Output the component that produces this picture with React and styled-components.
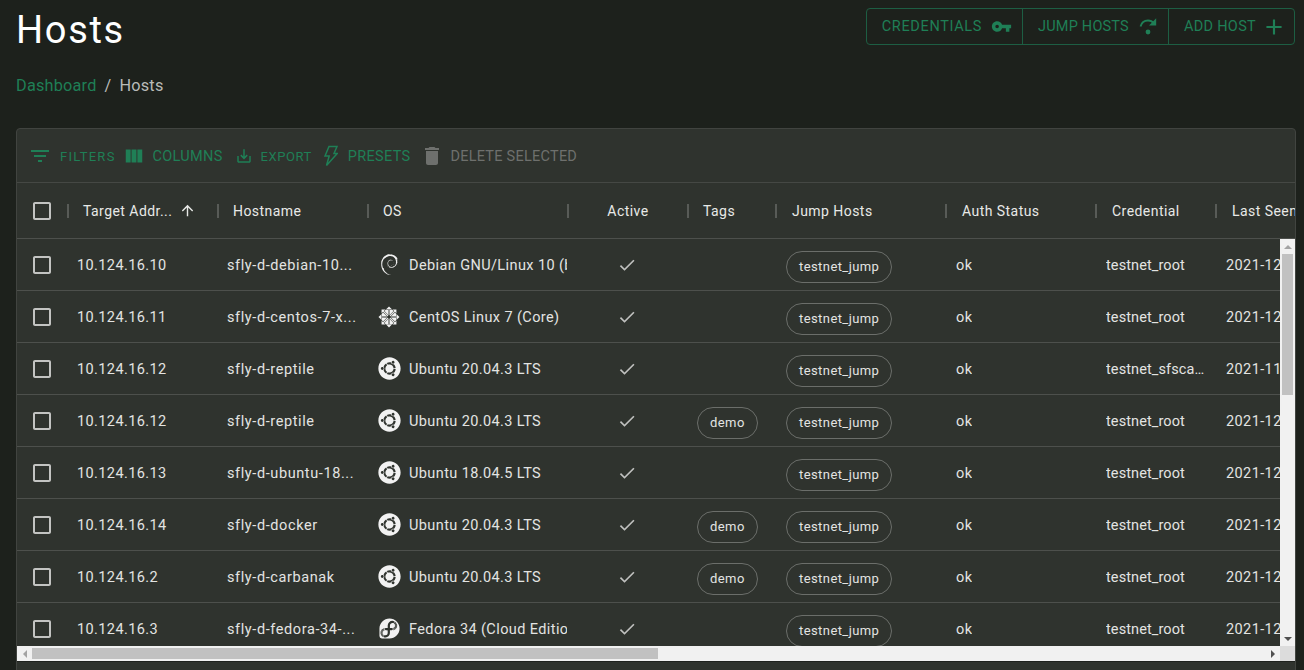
import React from 'react';
import styled, { css, createGlobalStyle } from 'styled-components';
import {
  MdFilterList, MdViewColumn, MdSaveAlt, MdDelete, MdAdd, MdCheck,
  MdArrowUpward, MdVpnKey, MdCheckBoxOutlineBlank,
} from 'react-icons/md';
import { FaUbuntu, FaCentos, FaFedora } from 'react-icons/fa';
import { SiDebian } from 'react-icons/si';

const GREEN = '#1f7f56';

const GlobalStyle = createGlobalStyle`
  html, body {
    margin: 0;
    height: 100%;
    overflow: hidden;
    background: #1d211c;
    font-family: "Roboto", "Liberation Sans", sans-serif;
  }
`;

const Page = styled.div`
  height: 670px;
  overflow: hidden;
  padding: 0 9px 0 16px;
  box-sizing: border-box;
`;

const TopBar = styled.div`
  display: flex;
  justify-content: space-between;
  align-items: flex-start;
  height: 128px;
`;

const Title = styled.h1`
  margin: 7px 0 0;
  font-size: 38px;
  line-height: 46px;
  font-weight: 400;
  letter-spacing: 1.7px;
  color: #fff;
`;

const Crumbs = styled.div`
  margin-top: 21px;
  font-size: 16.3px;
  line-height: 24px;
  letter-spacing: 0.2px;
  color: #b9bbb8;
  display: flex;
  gap: 8px;
`;

const CrumbLink = styled.span`
  color: ${GREEN};
`;

const ButtonGroup = styled.div`
  display: flex;
  margin-top: 8px;
  height: 37px;
  border: 1px solid #1d5e43;
  border-radius: 4px;
  box-sizing: border-box;
`;

const GroupButton = styled.div`
  display: flex;
  align-items: center;
  gap: ${(p) => p.$gap}px;
  padding: 0 ${(p) => p.$right}px 0 15px;
  color: ${GREEN};
  font-size: 14.5px;
  letter-spacing: ${(p) => p.$spacing}px;
  & + & {
    border-left: 1px solid #1d5e43;
  }
`;

const Card = styled.div`
  width: 1280px;
  height: 560px;
  background: #2f332e;
  border: 1px solid #414440;
  border-radius: 4px;
  box-sizing: border-box;
  overflow: hidden;
`;

const Toolbar = styled.div`
  display: flex;
  align-items: center;
  height: 54px;
  padding-left: 11px;
  border-bottom: 1px solid #454844;
  box-sizing: border-box;
`;

const ToolButton = styled.div`
  display: flex;
  align-items: center;
  gap: ${(p) => p.$gap}px;
  margin-left: ${(p) => p.$left}px;
  padding-top: 1px;
  color: ${(p) => (p.$off ? '#6e706d' : GREEN)};
  font-size: ${(p) => p.$size}px;
  letter-spacing: ${(p) => p.$spacing}px;
`;

const HeaderRow = styled.div`
  display: flex;
  align-items: center;
  height: 56px;
  width: 1278px;
  overflow: hidden;
  border-bottom: 1px solid #4d504c;
  box-sizing: border-box;
`;

const HeadCell = styled.div`
  flex: 0 0 ${(p) => p.$w}px;
  box-sizing: border-box;
  display: flex;
  align-items: center;
  justify-content: ${(p) => (p.$center ? 'center' : 'flex-start')};
  height: 14px;
  padding-left: ${(p) => (p.$center ? 0 : p.$pad || 14)}px;
  border-left: 2px solid #585b57;
  font-size: 14px;
  letter-spacing: 0.45px;
  color: #e8e9e7;
  white-space: nowrap;
`;

const SortArrow = styled(MdArrowUpward)`
  margin-left: 7px;
`;

const CheckCell = styled.div`
  flex: 0 0 ${(p) => p.$w}px;
  display: flex;
  align-items: center;
  justify-content: center;
  color: #c3c4c2;
  font-size: 24px;
  padding-right: ${(p) => p.$pad || 0}px;
`;

const Viewport = styled.div`
  position: relative;
  width: 1278px;
  height: 422px;
  overflow: hidden;
  border-bottom: 1px solid #1f221e;
`;

const Row = styled.div`
  display: flex;
  height: 52px;
  border-bottom: 1px solid #4d504c;
  box-sizing: border-box;
`;

const Cell = styled.div`
  flex: 0 0 ${(p) => p.$w}px;
  box-sizing: border-box;
  display: flex;
  align-items: center;
  justify-content: ${(p) => (p.$center ? 'center' : 'flex-start')};
  padding: 0 10px;
  overflow: hidden;
  font-size: 14.5px;
  letter-spacing: 0.4px;
  color: #e3e4e2;
  white-space: nowrap;
`;

const CellText = styled.span`
  overflow: hidden;
  padding-top: 2px;
  letter-spacing: ${(p) => (p.$spacing !== undefined ? `${p.$spacing}px` : 'inherit')};
  text-overflow: ${(p) => (p.$clip ? 'clip' : 'ellipsis')};
`;

const OsCell = styled(Cell)`
  gap: 8px;
  padding-right: 0;
`;

const OsIcon = styled.span`
  flex: 0 0 24px;
  height: 24px;
  display: flex;
  align-items: center;
  justify-content: center;
  color: #f2f2f2;
`;

const Chip = styled.span`
  display: inline-flex;
  align-items: center;
  height: 32px;
  margin-top: 4px;
  padding: 0 12px;
  border: 1px solid #6b6e6a;
  border-radius: 16px;
  box-sizing: border-box;
  font-size: 13px;
  letter-spacing: 0.42px;
  color: #e3e4e2;
`;

const VBar = styled.div`
  position: absolute;
  top: 0;
  right: 0;
  width: 15px;
  height: 407px;
  background: #f1f1f1;
  display: flex;
  flex-direction: column;
`;

const HBar = styled.div`
  position: absolute;
  left: 0;
  bottom: 0;
  width: 1263px;
  height: 15px;
  background: #f1f1f1;
  display: flex;
`;

const Corner = styled.div`
  position: absolute;
  right: 0;
  bottom: 0;
  width: 15px;
  height: 15px;
  background: #dcdcdc;
`;

const BarButton = styled.div`
  flex: 0 0 15px;
  display: flex;
  align-items: center;
  justify-content: center;
  ${(p) => p.$last && css`margin-${p.$horizontal ? 'left' : 'top'}: auto;`}
`;

const Thumb = styled.div`
  background: #c1c1c1;
  ${(p) => (p.$horizontal
    ? css`margin: 2px 0; flex: 0 0 626px;`
    : css`margin: 0 2px; flex: 0 0 141px;`)}
`;

const Triangle = styled.span`
  width: 0;
  height: 0;
  border-style: solid;
  border-color: transparent;
  ${(p) => {
    const color = p.$off ? '#a3a3a3' : '#505050';
    if (p.$dir === 'up') return css`border-width: 0 4px 4.5px; border-bottom-color: ${color};`;
    if (p.$dir === 'down') return css`border-width: 4.5px 4px 0; border-top-color: ${color};`;
    if (p.$dir === 'left') return css`border-width: 4px 4.5px 4px 0; border-right-color: ${color};`;
    return css`border-width: 4px 0 4px 4.5px; border-left-color: ${color};`;
  }}
`;

const BoltIcon = () => (
  <svg width="14" height="22" viewBox="0 0 14 22" fill="none" stroke="currentColor" strokeWidth="1.5">
    <path d="M5 1.5h8l-3 7h3.2L2.5 20.5l2.7-9.5H1z" />
  </svg>
);

// arc with an arrow over a dot
const StepOverIcon = () => (
  <svg width="24" height="24" viewBox="0 0 24 24" fill="currentColor">
    <circle cx="12" cy="17" r="2.4" />
    <path d="M4.5 11.5C5.5 7.8 8.5 5.5 12 5.5c2.4 0 4.4 1 5.8 2.8" fill="none" stroke="currentColor" strokeWidth="1.9" />
    <path d="M20.2 3.2v7.3h-7.2z" />
  </svg>
);

const UBUNTU = <FaUbuntu size={23} />;
const hosts = [
  ['10.124.16.10', 'sfly-d-debian-10...', <SiDebian size={21} />, 'Debian GNU/Linux 10 (buster)', '', 'testnet_root', '2021-12'],
  ['10.124.16.11', 'sfly-d-centos-7-x...', <FaCentos size={24} />, 'CentOS Linux 7 (Core)', '', 'testnet_root', '2021-12'],
  ['10.124.16.12', 'sfly-d-reptile', UBUNTU, 'Ubuntu 20.04.3 LTS', '', 'testnet_sfsca...', '2021-11'],
  ['10.124.16.12', 'sfly-d-reptile', UBUNTU, 'Ubuntu 20.04.3 LTS', 'demo', 'testnet_root', '2021-12'],
  ['10.124.16.13', 'sfly-d-ubuntu-18...', UBUNTU, 'Ubuntu 18.04.5 LTS', '', 'testnet_root', '2021-12'],
  ['10.124.16.14', 'sfly-d-docker', UBUNTU, 'Ubuntu 20.04.3 LTS', 'demo', 'testnet_root', '2021-12'],
  ['10.124.16.2', 'sfly-d-carbanak', UBUNTU, 'Ubuntu 20.04.3 LTS', 'demo', 'testnet_root', '2021-12'],
  ['10.124.16.3', 'sfly-d-fedora-34-...', <FaFedora size={23} />, 'Fedora 34 (Cloud Edition)', '', 'testnet_root', '2021-12'],
  ['10.124.16.4', 'sfly-d-ubuntu-20...', UBUNTU, 'Ubuntu 20.04.3 LTS', '', 'testnet_root', '2021-12'],
];

export default function App() {
  return (
    <Page>
      <GlobalStyle />
      <TopBar>
        <div>
          <Title>Hosts</Title>
          <Crumbs>
            <CrumbLink>Dashboard</CrumbLink>
            <span>/</span>
            <span>Hosts</span>
          </Crumbs>
        </div>
        <ButtonGroup>
          <GroupButton $gap={9} $right={10} $spacing={0.65}>CREDENTIALS <MdVpnKey size={21} /></GroupButton>
          <GroupButton $gap={7} $right={8} $spacing={0.2}>JUMP HOSTS <StepOverIcon /></GroupButton>
          <GroupButton $gap={5} $right={7} $spacing={0.3}>ADD HOST <MdAdd size={26} /></GroupButton>
        </ButtonGroup>
      </TopBar>
      <Card>
        <Toolbar>
          <ToolButton $gap={8} $left={0} $size={13} $spacing={1.25}><MdFilterList size={24} />FILTERS</ToolButton>
          <ToolButton $gap={8} $left={7} $size={14.5} $spacing={0.3}><MdViewColumn size={22} />COLUMNS</ToolButton>
          <ToolButton $gap={8} $left={12} $size={13} $spacing={0.55}><MdSaveAlt size={18} />EXPORT</ToolButton>
          <ToolButton $gap={10} $left={12} $size={14.5} $spacing={0.3}><BoltIcon />PRESETS</ToolButton>
          <ToolButton $off $gap={6} $left={10} $size={14.5} $spacing={0.25}><MdDelete size={24} />DELETE SELECTED</ToolButton>
        </Toolbar>
        <HeaderRow>
          <CheckCell $w={49} $pad={1}><MdCheckBoxOutlineBlank /></CheckCell>
          <HeadCell $w={150}>Target Addr...<SortArrow size={17} /></HeadCell>
          <HeadCell $w={150}>Hostname</HeadCell>
          <HeadCell $w={200}>OS</HeadCell>
          <HeadCell $w={120} $center>Active</HeadCell>
          <HeadCell $w={88}>Tags</HeadCell>
          <HeadCell $w={170} $pad={15}>Jump Hosts</HeadCell>
          <HeadCell $w={150} $pad={15}>Auth Status</HeadCell>
          <HeadCell $w={120} $pad={15}>Credential</HeadCell>
          <HeadCell $w={120} $pad={15}>Last Seen</HeadCell>
        </HeaderRow>
        <Viewport>
          {hosts.map((h, i) => (
            <Row key={i}>
              <CheckCell $w={50}><MdCheckBoxOutlineBlank /></CheckCell>
              <Cell $w={150}><CellText>{h[0]}</CellText></Cell>
              <Cell $w={150}><CellText $spacing={0.6}>{h[1]}</CellText></Cell>
              <OsCell $w={200}>
                <OsIcon>{h[2]}</OsIcon>
                <CellText $clip>{h[3]}</CellText>
              </OsCell>
              <Cell $w={120} $center><MdCheck size={20} color="#c0c1bf" /></Cell>
              <Cell $w={89}>{h[4] && <Chip>{h[4]}</Chip>}</Cell>
              <Cell $w={170}><Chip>testnet_jump</Chip></Cell>
              <Cell $w={150}><CellText>ok</CellText></Cell>
              <Cell $w={120}><CellText $spacing={0.1}>{h[5]}</CellText></Cell>
              <Cell $w={120}><CellText>{h[6]}-01</CellText></Cell>
            </Row>
          ))}
          <VBar>
            <BarButton><Triangle $dir="up" $off /></BarButton>
            <Thumb />
            <BarButton $last><Triangle $dir="down" /></BarButton>
          </VBar>
          <HBar>
            <BarButton><Triangle $dir="left" $off /></BarButton>
            <Thumb $horizontal />
            <BarButton $last $horizontal><Triangle $dir="right" /></BarButton>
          </HBar>
          <Corner />
        </Viewport>
      </Card>
    </Page>
  );
}
